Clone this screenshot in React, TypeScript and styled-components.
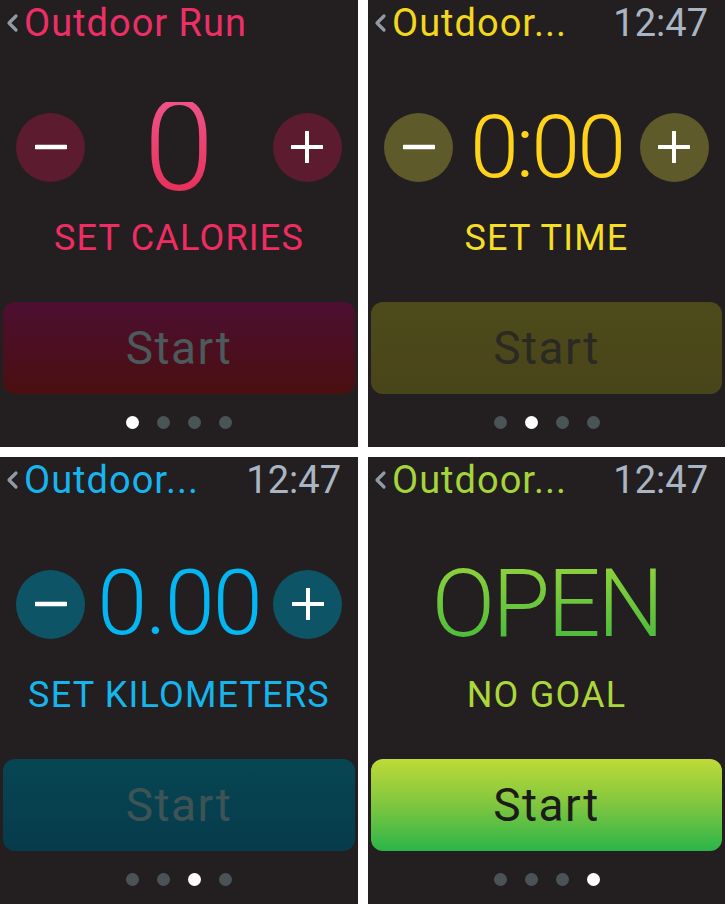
import React from 'react';
import styled, { createGlobalStyle } from 'styled-components';

// 类型定义
interface Workout {
  id: string;
  title: string;
  titleColor: string;
  value: string;
  valueColor: string;
  valueSize: number;
  valueSpacing: number;
  label: string;
  labelColor: string;
  circleColor?: string;
  buttonBg: string;
  buttonText: string;
  active: number;
  showTime: boolean;
}

const GlobalStyle = createGlobalStyle`
  html, body {
    margin: 0;
    padding: 0;
    background: #ffffff;
  }
  body {
    font-family: Roboto, 'Liberation Sans', sans-serif;
  }
`;

const Grid = styled.div`
  display: grid;
  grid-template-columns: 358px 357px;
  grid-template-rows: 447px 447px;
  gap: 10px;
  width: 725px;
  height: 904px;
  background: #ffffff;
`;

const Panel = styled.section`
  display: flex;
  flex-direction: column;
  align-items: stretch;
  padding: 0 3px;
  background: #231f20;
  overflow: hidden;
`;

const Header = styled.div`
  display: flex;
  align-items: center;
  justify-content: space-between;
  height: 46px;
  padding: 0 14px 0 2px;
`;

const TitleGroup = styled.div`
  display: flex;
  align-items: center;
  gap: 5px;
`;

const Title = styled.span<{ $color: string }>`
  font-size: 38px;
  line-height: 46px;
  letter-spacing: 1px;
  color: ${(p) => p.$color};
  white-space: nowrap;
`;

const Time = styled.span`
  font-size: 38px;
  line-height: 46px;
  letter-spacing: 0px;
  color: #a9b5c2;
`;

const ValueRow = styled.div<{ $centered: boolean }>`
  display: flex;
  align-items: center;
  justify-content: ${(p) => (p.$centered ? 'center' : 'space-between')};
  height: 90px;
  margin-top: 56px;
  padding: 0 13px;
`;

const RoundButton = styled.div<{ $bg: string }>`
  display: flex;
  align-items: center;
  justify-content: center;
  width: 69px;
  height: 69px;
  border-radius: 50%;
  background: ${(p) => p.$bg};
  flex-shrink: 0;
`;

const Value = styled.span<{ $color: string; $size: number; $spacing: number }>`
  font-size: ${(p) => p.$size}px;
  line-height: 90px;
  font-weight: 300;
  letter-spacing: ${(p) => p.$spacing}px;
  white-space: nowrap;
  background: ${(p) => p.$color};
  -webkit-background-clip: text;
  background-clip: text;
  color: transparent;
`;

const Label = styled.div<{ $color: string }>`
  height: 40px;
  margin-top: 26px;
  font-size: 36px;
  line-height: 40px;
  letter-spacing: 1.2px;
  text-align: center;
  color: ${(p) => p.$color};
  white-space: nowrap;
`;

const StartButton = styled.div<{ $bg: string; $color: string }>`
  display: flex;
  align-items: center;
  justify-content: center;
  height: 92px;
  margin-top: 44px;
  border-radius: 12px;
  background: ${(p) => p.$bg};
  color: ${(p) => p.$color};
  font-size: 46px;
  letter-spacing: 1.5px;
`;

const Dots = styled.div`
  display: flex;
  justify-content: center;
  gap: 18px;
  margin-top: 22px;
`;

const Dot = styled.span<{ $on: boolean }>`
  width: 13px;
  height: 13px;
  border-radius: 50%;
  background: ${(p) => (p.$on ? '#ffffff' : '#4a5456')};
`;

const Chevron = () => (
  <svg width="14" height="22" viewBox="0 0 14 22">
    <path d="M11 4 L4 11 L11 18" fill="none" stroke="#8f9ba8" strokeWidth="3.2" strokeLinecap="round" strokeLinejoin="round" />
  </svg>
);

const Minus = () => (
  <svg width="32" height="32" viewBox="0 0 32 32">
    <line x1="1" y1="16" x2="31" y2="16" stroke="#ffffff" strokeWidth="4.5" strokeLinecap="round" />
  </svg>
);

const Plus = () => (
  <svg width="32" height="32" viewBox="0 0 32 32">
    <line x1="1" y1="16" x2="31" y2="16" stroke="#ffffff" strokeWidth="4" strokeLinecap="round" />
    <line x1="16" y1="1" x2="16" y2="31" stroke="#ffffff" strokeWidth="4" strokeLinecap="round" />
  </svg>
);

const workouts: Workout[] = [
  {
    id: 'calories',
    title: 'Outdoor Run',
    titleColor: '#ee2f67',
    value: '0',
    valueColor: 'linear-gradient(180deg, #ef5289 0%, #e8305a 100%)',
    valueSize: 126,
    valueSpacing: 0,
    label: 'SET CALORIES',
    labelColor: '#ef2d63',
    circleColor: '#5c1b2e',
    buttonBg: 'linear-gradient(180deg, #4c0f31 0%, #4a0f10 100%)',
    buttonText: '#4b5a5c',
    active: 0,
    showTime: false,
  },
  {
    id: 'time',
    title: 'Outdoor...',
    titleColor: '#f3d71d',
    value: '0:00',
    valueColor: '#ffd31a',
    valueSize: 88,
    valueSpacing: -3,
    label: 'SET TIME',
    labelColor: '#f6de27',
    circleColor: '#5e5a29',
    buttonBg: 'linear-gradient(180deg, #4d4a1b 0%, #49451a 100%)',
    buttonText: '#2b2a22',
    active: 1,
    showTime: true,
  },
  {
    id: 'distance',
    title: 'Outdoor...',
    titleColor: '#16b5ef',
    value: '0.00',
    valueColor: '#04b6f2',
    valueSize: 90,
    valueSpacing: -2,
    label: 'SET KILOMETERS',
    labelColor: '#15b5ee',
    circleColor: '#0e5467',
    buttonBg: 'linear-gradient(180deg, #064653 0%, #073b4b 100%)',
    buttonText: '#3e5355',
    active: 2,
    showTime: true,
  },
  {
    id: 'open',
    title: 'Outdoor...',
    titleColor: '#a4d53a',
    value: 'OPEN',
    valueColor: 'linear-gradient(180deg, #93d33c 0%, #43b93c 100%)',
    valueSize: 94,
    valueSpacing: -3,
    label: 'NO GOAL',
    labelColor: '#abd73a',
    buttonBg: 'linear-gradient(180deg, #bfda38 0%, #7fc63f 50%, #2bb54a 100%)',
    buttonText: '#1b1c1a',
    active: 3,
    showTime: true,
  },
];

const App: React.FC = () => {
  return (
    <>
      <GlobalStyle />
      <Grid>
        {workouts.map((w) => (
          <Panel key={w.id}>
            <Header>
              <TitleGroup>
                <Chevron />
                <Title $color={w.titleColor}>{w.title}</Title>
              </TitleGroup>
              {w.showTime && <Time>12:47</Time>}
            </Header>

            <ValueRow $centered={!w.circleColor}>
              {w.circleColor && (
                <RoundButton $bg={w.circleColor}>
                  <Minus />
                </RoundButton>
              )}
              <Value $color={w.valueColor} $size={w.valueSize} $spacing={w.valueSpacing}>
                {w.value}
              </Value>
              {w.circleColor && (
                <RoundButton $bg={w.circleColor}>
                  <Plus />
                </RoundButton>
              )}
            </ValueRow>

            <Label $color={w.labelColor}>{w.label}</Label>

            <StartButton $bg={w.buttonBg} $color={w.buttonText}>
              Start
            </StartButton>

            <Dots>
              {[0, 1, 2, 3].map((i) => (
                <Dot key={i} $on={i === w.active} />
              ))}
            </Dots>
          </Panel>
        ))}
      </Grid>
    </>
  );
};

export default App;
